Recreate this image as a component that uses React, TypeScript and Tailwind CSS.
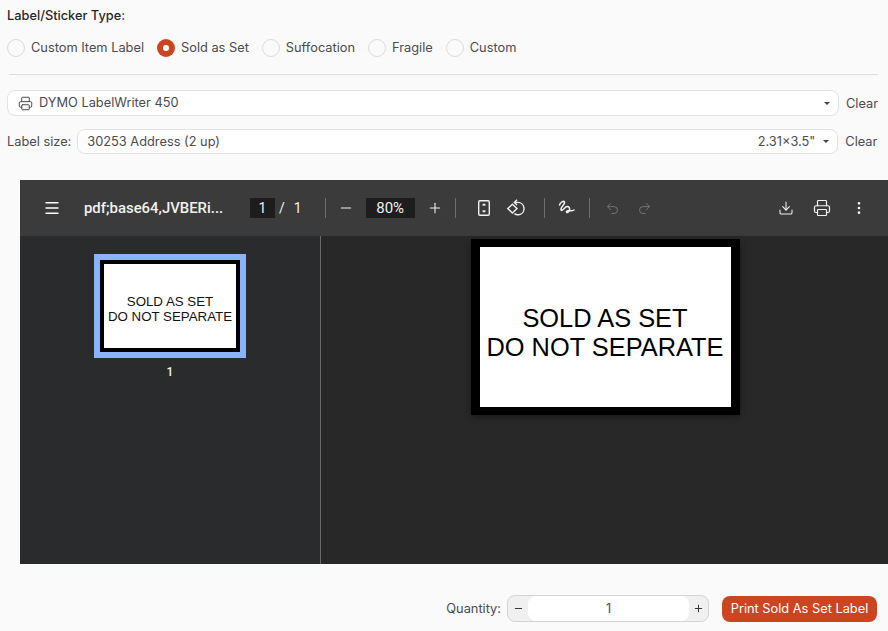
import { Printer, Menu, Minus, Plus, Undo2, Redo2, Download, EllipsisVertical } from "lucide-react";

const radios = [
  { label: "Custom Item Label", checked: false },
  { label: "Sold as Set", checked: true },
  { label: "Suffocation", checked: false },
  { label: "Fragile", checked: false },
  { label: "Custom", checked: false },
];

function Caret() {
  return <span className="ml-2 h-0 w-0 border-x-[3px] border-t-[3px] border-x-transparent border-t-[#444]"></span>;
}

function Divider({ className }: { className: string }) {
  return <span className={`block h-5 w-px shrink-0 bg-[#6e6e6e] ${className}`}></span>;
}

function FitIcon() {
  return (
    <svg width="20" height="20" viewBox="0 0 20 20" fill="none" stroke="#f1f1f1" strokeWidth="1.4">
      <rect x="4.7" y="2.7" width="10.6" height="14.6" rx="1.2" />
      <path d="M8.6 7.6 10 6.2l1.4 1.4M8.6 12.4 10 13.8l1.4-1.4" />
    </svg>
  );
}

function RotateIcon() {
  return (
    <svg width="20" height="20" viewBox="0 0 20 20" fill="none" stroke="#f1f1f1" strokeWidth="1.4">
      <path d="M6.4 6.2 1.8 10.6l4.6 4.4 4.6-4.4z" />
      <path d="M8.6 4.4h3.2a6.2 6.2 0 0 1 1.6 12.2 6 6 0 0 1-5-1" />
      <path d="M11 1.8 8.4 4.4 11 7" />
    </svg>
  );
}

function DrawIcon() {
  return (
    <svg width="20" height="20" viewBox="0 0 20 20" fill="none" stroke="#f1f1f1" strokeWidth="1.5" strokeLinecap="round">
      <path d="M3.5 7C4.5 4 7.5 2.5 8.5 4 9.5 6 4 9.5 5 12c1 2 4-3.5 6-3.5s3 1.500 2.500 3.500c-.5 2.500-3.500 3.500-3 1.500s4.500.5 7.500-1.500" />
    </svg>
  );
}

export default function App() {
  return (
    <div className="h-[631px] w-[888px] overflow-hidden bg-[#fafafa] font-['Inter',sans-serif] text-[#4b4b50]">
      <div className="pl-[7px] pr-[11px] pt-[8px]">
        <div className="text-[12.8px] font-medium leading-[16px] text-[#27272a]">Label/Sticker Type:</div>

        <div className="mt-[15px] flex h-[18px] items-center">
          {radios.map((r) => (
            <label key={r.label} className="mr-[13px] flex items-center gap-[6px] text-[12.8px]">
              {r.checked ? (
                <span className="flex h-[18px] w-[18px] items-center justify-center rounded-full bg-[#cc4522]">
                  <span className="h-[6px] w-[6px] rounded-full bg-white"></span>
                </span>
              ) : (
                <span className="h-[18px] w-[18px] rounded-full border border-[#dcdcdc] bg-[#fafafa]"></span>
              )}
              {r.label}
            </label>
          ))}
        </div>

        <div className="ml-[2px] mt-[17px] h-px w-[869px] bg-[#dedede]"></div>

        <div className="mt-[15px] flex items-center">
          <div className="flex h-[26px] w-[832px] shrink-0 items-center rounded-lg border border-[#e2e2e2] bg-white pl-[10px] pr-[8px] text-[12.8px]">
            <Printer size={15} strokeWidth={1.6} className="mr-[6px]" />
            <span>DYMO LabelWriter 450</span>
            <span className="ml-auto flex items-center"><Caret /></span>
          </div>
          <span className="ml-[7px] pt-px text-[12.8px]">Clear</span>
        </div>

        <div className="mt-[13px] flex items-center">
          <span className="mr-[6px] whitespace-nowrap text-[12.8px]">Label size:</span>
          <div className="flex h-[25px] w-[761px] shrink-0 items-center rounded-lg border border-[#e2e2e2] bg-white pl-[9px] pr-[8px] text-[12.8px]">
            <span>30253 Address (2 up)</span>
            <span className="ml-auto">2.31×3.5"</span>
            <Caret />
          </div>
          <span className="ml-[7px] text-[12.8px]">Clear</span>
        </div>
      </div>

      <div className="ml-[20px] mt-[26px] h-[384px] w-[868px] bg-[#282828] font-['Roboto',sans-serif] text-[#f1f1f1]">
        <div className="flex h-[56px] items-center bg-[#3b3b3b] text-[14px]">
          <Menu size={18} strokeWidth={1.8} className="ml-[23px] text-white" />
          <span className="ml-[23px] w-[162px] truncate text-[14.9px] font-medium">pdf;base64,JVBERi...</span>
          <span className="ml-[4px] flex h-[20px] w-[25px] items-center justify-center bg-[#1d1d1d]">1</span>
          <span className="ml-[4px]">/</span>
          <span className="ml-[9px]">1</span>
          <Divider className="ml-[23px]" />
          <Minus size={16} strokeWidth={1.6} className="ml-[12px]" />
          <span className="ml-[12px] flex h-[20px] w-[49px] items-center justify-center bg-[#1d1d1d] text-[15px]">80%</span>
          <Plus size={16} strokeWidth={1.6} className="ml-[12px]" />
          <Divider className="ml-[12px]" />
          <span className="ml-[18px]"><FitIcon /></span>
          <span className="ml-[12px]"><RotateIcon /></span>
          <Divider className="ml-[18px]" />
          <span className="ml-[11px]"><DrawIcon /></span>
          <Divider className="ml-[13px]" />
          <Undo2 size={15} strokeWidth={1.4} className="ml-[15px] text-[#7b7b7b]" />
          <Redo2 size={15} strokeWidth={1.4} className="ml-[17px] text-[#7b7b7b]" />
          <Download size={16} strokeWidth={1.6} className="ml-auto" />
          <Printer size={18} strokeWidth={1.6} className="ml-[19px]" />
          <EllipsisVertical size={16} strokeWidth={2} className="ml-[20px] mr-[21px]" />
        </div>

        <div className="flex h-[328px]">
          <div className="flex w-[301px] flex-col items-center border-r border-[#6a6a6a] bg-[#2a2b2d] pt-[18px]">
            <div className="border-[6px] border-[#8ab4f8]">
              <div className="flex h-[92px] w-[140px] flex-col items-center justify-center border-[4px] border-black bg-white pt-[5px] font-['Liberation_Sans',sans-serif] text-[13.3px] leading-[15px] text-[#111]">
                <span>SOLD AS SET</span>
                <span className="whitespace-nowrap">DO NOT SEPARATE</span>
              </div>
            </div>
            <span className="mt-[5px] text-[12px] font-medium">1</span>
          </div>
          <div className="flex flex-1 justify-center pt-[3px] pl-[1px]">
            <div className="flex h-[176px] w-[269px] flex-col items-center justify-center border-x-[9px] border-y-[8px] border-black bg-white pt-[11px] font-['Liberation_Sans',sans-serif] text-[25.4px] leading-[29px] text-black shadow-[0_2px_6px_rgba(0,0,0,0.4)]">
              <span>SOLD AS SET</span>
              <span className="whitespace-nowrap">DO NOT SEPARATE</span>
            </div>
          </div>
        </div>
      </div>

      <div className="mt-[31px] flex items-center justify-end pr-[11px]">
        <span className="mr-[6px] text-[12.8px]">Quantity:</span>
        <div className="flex h-[27px] w-[202px] items-center rounded-lg border border-[#d4d4d4] bg-[#f0f0f0]">
          <span className="flex w-[20px] justify-center"><Minus size={11} strokeWidth={2} className="text-[#27272a]" /></span>
          <span className="flex h-[25px] flex-1 items-center justify-center rounded-lg bg-white text-[12.8px]">1</span>
          <span className="flex w-[19px] justify-center"><Plus size={11} strokeWidth={2} className="text-[#27272a]" /></span>
        </div>
        <button className="ml-[13px] h-[26px] w-[155px] rounded-lg bg-[#cc4522] text-[12.8px] font-normal text-white">Print Sold As Set Label</button>
      </div>
    </div>
  );
}
